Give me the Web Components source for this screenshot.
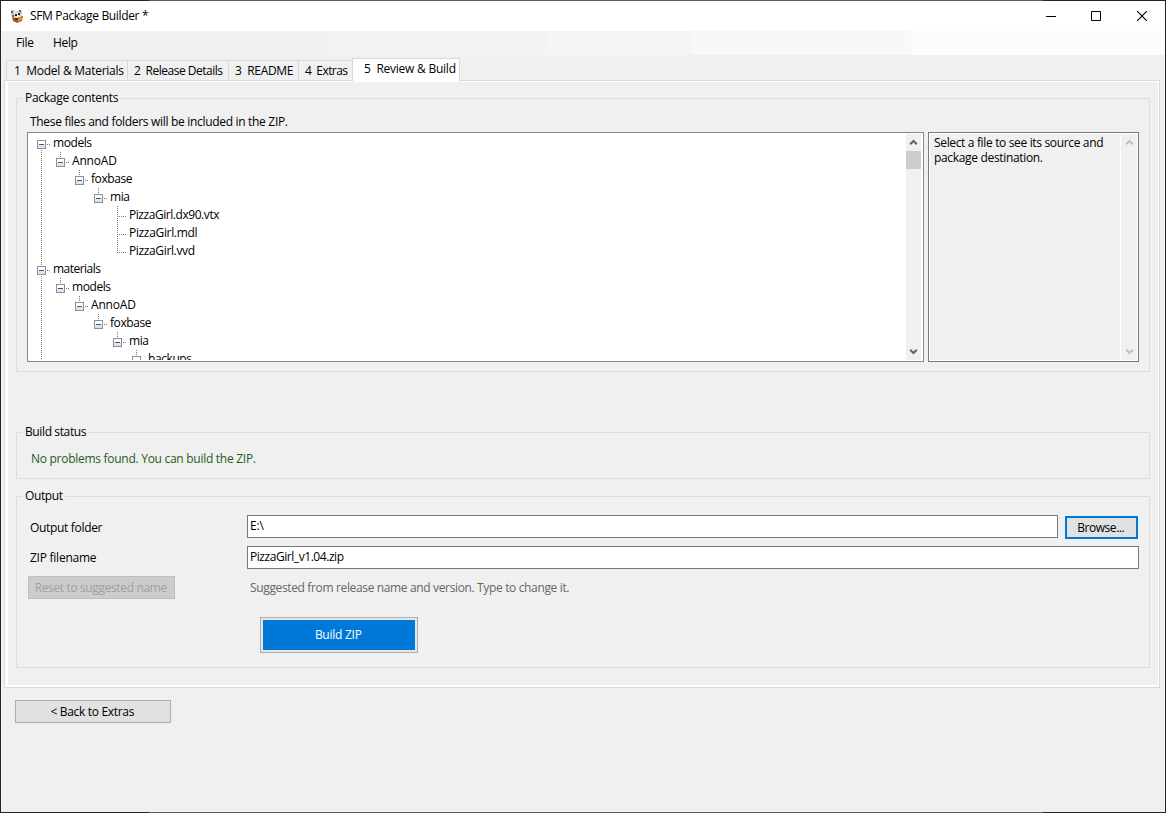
<!DOCTYPE html>
<html lang="en">
<head>
<meta charset="utf-8">
<title>SFM Package Builder</title>
<style>
html,body{margin:0;height:100%;overflow:hidden}
body{font:12px/16px "Open Sans","Noto Sans",sans-serif;color:#000}
</style>
</head>
<body>
<app-window></app-window>
<script>
function define(name, html, setup) {
  const t = document.createElement('template');
  t.innerHTML = html;
  customElements.define(name, class extends HTMLElement {
    connectedCallback() {
      if (this.shadowRoot) return;
      this.attachShadow({mode: 'open'}).append(t.content.cloneNode(true));
      if (setup) setup(this, this.shadowRoot);
    }
  });
}

/* Single-line label whose tracking is adjusted to a requested width. */
define('fit-text', `<style>:host{display:block;white-space:pre;flex:none}span{display:inline-block}</style><span><slot></slot></span>`, (el, root) => {
  const s = root.querySelector('span'), w = +el.getAttribute('w');
  const natural = s.getBoundingClientRect().width;
  const n = el.textContent.length;
  if (w && n) s.style.letterSpacing = ((w - .5 - natural) / (n - 1)) + 'px';
});

define('title-bar', `<style>
:host{display:flex;height:30px;background:#fff;align-items:center;box-sizing:border-box;padding-left:9px}
.app{width:14px;height:14px;margin-right:6px}
.grow{flex:1}
.ctl{width:46px;height:30px;display:flex;align-items:center;justify-content:center}
svg{display:block}
</style>
<svg class="app" viewBox="0 0 14 14"><path d="M1 1h3l1 2 3-1 2-1 2 1v3l-1 2-8 1L1 6z" fill="#c9c7c6"/><path d="M1 2h2v2H1zM9 1h2v2H9zM2 6h2v2H2z" fill="#666"/><path d="M4 3l3 1 2-1 1 2-2 2H5z" fill="#f4f0ec"/><path d="M5 5h2v2H5zM8 4h2v2H8z" fill="#222"/><path d="M2 8l5 1 6-2-1 5-5 2-4-2z" fill="#a9591f"/><path d="M7 9l5-2v4l-4 2z" fill="#e08a35"/><path d="M5 9h3v2H5z" fill="#5b2c12"/></svg>
<fit-text w="119">SFM Package Builder *</fit-text><span class="grow"></span>
<span class="ctl"><svg width="10" height="10" style="margin-left:2px"><path d="M0 5.5h10" stroke="#000"/></svg></span>
<span class="ctl"><svg width="10" height="10"><path d="M.5.5h9v9h-9z" fill="none" stroke="#000"/></svg></span>
<span class="ctl"><svg width="10" height="10"><path d="M0 0l10 10M10 0L0 10" stroke="#000" stroke-width="1.1"/></svg></span>`);

define('menu-bar', `<style>
:host{display:flex;height:24px;align-items:center;padding-left:15px;gap:19.3px;background:linear-gradient(90deg,#f0f0f0 110px,#f1f1f1 110px 328px,#f3f3f3 328px 546px,#f5f5f5 546px 692px,#f8f8f8 692px 910px,#fcfcfc 910px)}
</style><fit-text w="18.5">File</fit-text><fit-text w="25.5">Help</fit-text>`);

define('tab-item', `<style>
:host{display:flex;box-sizing:border-box;height:20px;border:1px solid #d9d9d9;border-width:1px 1px 0 0;padding:2px 0 0 6px;background:#f0f0f0;flex:none}
:host([first]){border-left-width:1px;padding-left:7px}
:host([active]){height:23px;background:#fff;padding:2px 0 0 11px;position:relative;margin-bottom:-1px;border-left-width:1px}
:host([open-end]){border-right:0}
</style><slot></slot>`);

define('group-box', `<style>
:host{display:block;box-sizing:border-box;border:1px solid #dcdcdc}
.legend{display:flex;width:max-content;margin:-9px 0 0 6px;padding:0 2px;background:#f0f0f0;height:16px}
</style><div class="legend"><slot name="legend"></slot></div><slot></slot>`);

define('tree-row', `<style>
:host{display:flex;height:18px;flex:none}
svg{display:block;flex:none}
::slotted(fit-text){padding-top:1px}
</style><svg height="18" shape-rendering="crispEdges"></svg><slot></slot>`, (el, root) => {
  const lv = +el.getAttribute('level'), leaf = el.hasAttribute('leaf'), cx = 13 + 19 * lv;
  const dots = [];
  const dot = (x, y) => dots.push(`<path fill="#777" d="M${x} ${y}h1v1h-1z"/>`);
  const vert = (x, a, b) => { for (let y = a; y <= b; y += 2) dot(x, y); };
  vert(13, el.hasAttribute('top') ? 16 : 0, 17);
  if (lv) vert(cx, 0, leaf && !el.hasAttribute('last') ? 17 : leaf ? 10 : 4);
  for (let x = cx + (leaf ? 2 : 6); x <= cx + 8; x += 2) dot(x, 10);
  if (!leaf) dots.push(`<rect x="${cx-4}" y="6" width="9" height="9" rx="1" fill="#8c8f96"/><rect x="${cx-3}" y="7" width="7" height="7" fill="#fff"/><rect x="${cx-3}" y="11" width="7" height="3" fill="#e4e4e6"/><rect x="${cx-2}" y="10" width="5" height="1" fill="#3059a0"/>`);
  const svg = root.querySelector('svg');
  svg.setAttribute('width', 25 + 19 * lv);
  svg.innerHTML = dots.join('');
});

define('scroll-bar', `<style>
:host{display:flex;flex-direction:column;background:#f0f0f0;width:15px;box-sizing:border-box;color:#606066;flex:none}
:host([disabled]){color:#bfbfbf;width:17px;border-left:1px solid #fff}
.b{height:17px;display:flex;align-items:center;justify-content:center}
.thumb{height:18px;background:#cdcdcd}
:host([disabled]) .thumb{visibility:hidden}
.g{flex:1}
</style><div class="b"><svg width="9" height="7"><path d="M1.2 5.3l3.3-3.3 3.3 3.3" fill="none" stroke="currentColor" stroke-width="2"/></svg></div><div class="thumb"></div><div class="g"></div><div class="b"><svg width="9" height="7"><path d="M1.2 1.7L4.5 5l3.3-3.3" fill="none" stroke="currentColor" stroke-width="2"/></svg></div>`);

define('push-button', `<style>
:host{display:flex;box-sizing:border-box;align-items:center;justify-content:center;background:#e1e1e1;border:1px solid #adadad;flex:none;padding-right:1.5px}
:host([disabled]){background:#ccc;border-color:#bfbfbf;color:#a09fa8}
:host([focused]){border:2px solid #0078d7}
:host([primary]){background:#0078d7;color:#fff;box-shadow:inset 0 0 0 2px #e6e6e6}
</style><slot></slot>`);

define('text-field', `<style>
:host{display:block;box-sizing:border-box;height:23px;border:1px solid #7a7a7a;background:#fff;padding:2px 0 0 2px}
</style><slot></slot>`);

define('app-window', `<style>
:host{display:flex;flex-direction:column;box-sizing:border-box;width:1166px;height:813px;padding:1px;background:linear-gradient(90deg,#29222d 149px,#625b67 149px 1043px,#29222d 1043px)}
main{flex:1;background:#f0f0f0;padding:3px 5px 0 3px;display:flex;flex-direction:column}
.tabs{display:flex;height:22px;align-items:flex-end;padding-left:2px;flex:none}
.page{box-sizing:border-box;height:608px;border:1px solid #d9d9d9;background:#fff;padding:1px 1px 2px 3px;display:flex;flex:none;width:1156px}
.body{flex:1;background:#f0f0f0;padding:16px 8px 0 8px;display:flex;flex-direction:column}
.g1{height:274px}.g2{height:47px;margin-top:60px}.g3{height:172px;margin-top:17px}
.intro{padding:8px 0 0 13px}
.split{display:flex;gap:4px;padding:2px 0 0 10px}
.tree{box-sizing:border-box;width:897px;height:230px;border:1px solid #828790;padding:1px 2px 1px 0;display:flex;background:#fff}
.rows{flex:1;overflow:hidden;display:flex;flex-direction:column}
.info{box-sizing:border-box;width:211px;height:230px;border:1px solid #7a7a7a;padding:1px;display:flex;background:#fff}
.info div{flex:1;background:#f0f0f0;padding:1px 0 0 4px;line-height:15px}
.status{padding:11px 0 0 14px;color:#255c18}
.form{display:grid;grid-template-columns:219px 811px 80px;padding:11px 0 0 11px;row-gap:8px}
.form .l{padding:4px 0 0 2px}
.form .first{padding-top:5px;height:18px}
.wide{grid-column:2/4}
.hint{color:#666;padding:3px 0 0 3px}
.go{width:158px;height:36px;margin:18px 0 0 243px}
.back{width:156px;height:23px;margin:12px 0 0 11px}
</style>
<title-bar></title-bar><menu-bar></menu-bar>
<main>
<div class="tabs">
<tab-item first style="width:122px"><fit-text w="110.5">1  Model &amp; Materials</fit-text></tab-item>
<tab-item style="width:101px"><fit-text w="89.5">2  Release Details</fit-text></tab-item>
<tab-item style="width:70px"><fit-text w="59">3  README</fit-text></tab-item>
<tab-item open-end style="width:53px"><fit-text w="43.5">4  Extras</fit-text></tab-item>
<tab-item active style="width:108px"><fit-text w="92.5">5  Review &amp; Build</fit-text></tab-item>
</div>
<div class="page"><div class="body">
<group-box class="g1"><fit-text slot="legend" w="94">Package contents</fit-text>
<fit-text class="intro" w="258.5">These files and folders will be included in the ZIP.</fit-text>
<div class="split"><div class="tree"><div class="rows">
<tree-row level="0" top><fit-text w="39.5">models</fit-text></tree-row>
<tree-row level="1"><fit-text w="45.5">AnnoAD</fit-text></tree-row>
<tree-row level="2"><fit-text w="42">foxbase</fit-text></tree-row>
<tree-row level="3"><fit-text w="20.5">mia</fit-text></tree-row>
<tree-row level="4" leaf><fit-text w="91">PizzaGirl.dx90.vtx</fit-text></tree-row>
<tree-row level="4" leaf><fit-text w="69">PizzaGirl.mdl</fit-text></tree-row>
<tree-row level="4" leaf last><fit-text w="66.5">PizzaGirl.vvd</fit-text></tree-row>
<tree-row level="0"><fit-text w="48.5">materials</fit-text></tree-row>
<tree-row level="1"><fit-text w="39.5">models</fit-text></tree-row>
<tree-row level="2"><fit-text w="45.5">AnnoAD</fit-text></tree-row>
<tree-row level="3"><fit-text w="42">foxbase</fit-text></tree-row>
<tree-row level="4"><fit-text w="20.5">mia</fit-text></tree-row>
<tree-row level="5"><fit-text w="44.5">backups</fit-text></tree-row>
</div><scroll-bar></scroll-bar></div>
<div class="info"><div><fit-text w="170">Select a file to see its source and</fit-text><fit-text w="109.5">package destination.</fit-text></div><scroll-bar disabled></scroll-bar></div></div>
</group-box>
<group-box class="g2"><fit-text slot="legend" w="62">Build status</fit-text><fit-text class="status" w="225.5">No problems found. You can build the ZIP.</fit-text></group-box>
<group-box class="g3"><fit-text slot="legend" w="38.5">Output</fit-text>
<div class="form">
<fit-text class="l first" w="73">Output folder</fit-text><text-field><fit-text w="14.5">E:\\</fit-text></text-field><push-button focused style="width:73px;height:23px;margin:1px 0 -1px 7px"><fit-text w="48">Browse...</fit-text></push-button>
<fit-text class="l" w="67">ZIP filename</fit-text><text-field class="wide" style="width:892px"><fit-text w="94.5">PizzaGirl_v1.04.zip</fit-text></text-field>
<push-button disabled style="width:147px;height:23px;margin-top:-1px"><fit-text w="133">Reset to suggested name</fit-text></push-button><fit-text class="wide hint" w="320">Suggested from release name and version. Type to change it.</fit-text>
</div>
<push-button class="go" primary><fit-text w="47.5">Build ZIP</fit-text></push-button>
</group-box>
</div></div>
<push-button class="back"><fit-text w="84.5">&lt; Back to Extras</fit-text></push-button>
</main>`);
</script>
</body>
</html>
